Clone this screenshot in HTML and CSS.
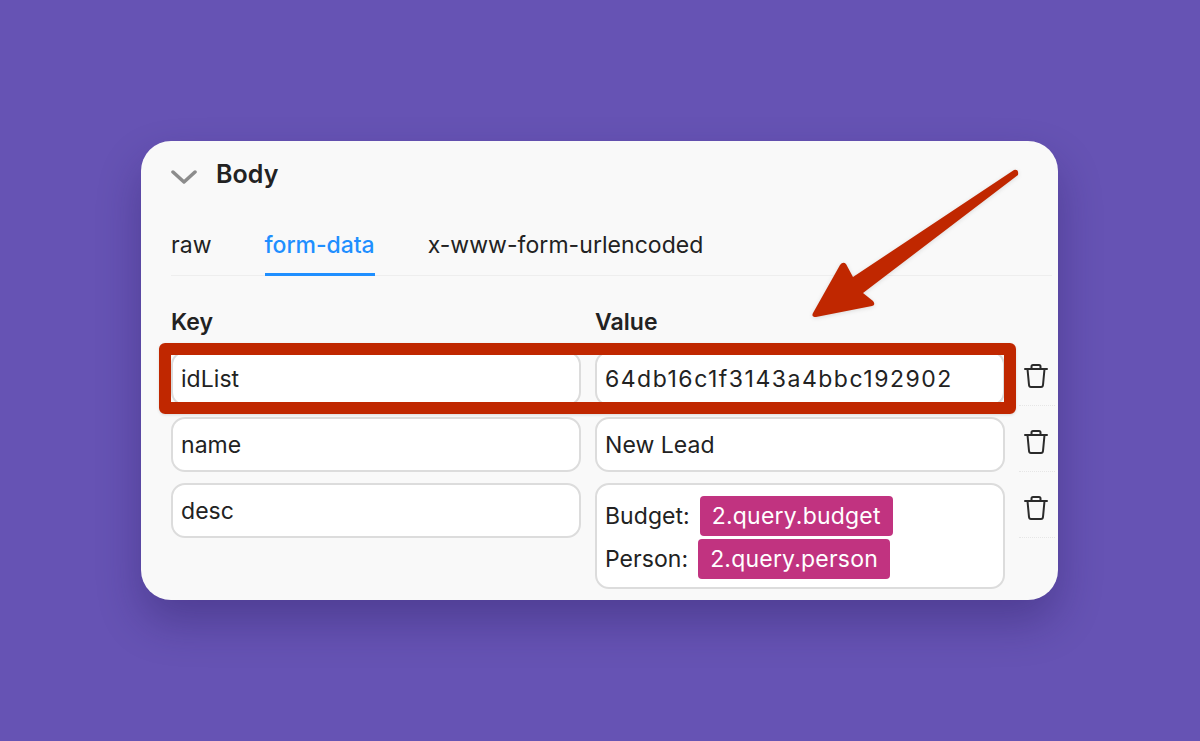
FILE: index.html
```html
<!DOCTYPE html>
<html lang="en">

<head>
  <meta charset="UTF-8">
  <meta name="viewport" content="width=device-width, initial-scale=1.0">
  <title>Body</title>
  <link rel="stylesheet" href="styles.css">
</head>

<body>
  <div class="card">
    <div class="card-header">
      <svg class="chevron" width="26" height="14" viewBox="0 0 26 14">
        <path d="M2 2 L13 12 L24 2" fill="none" stroke="#8c8c8c" stroke-width="3.5" stroke-linecap="round" stroke-linejoin="round" />
      </svg>
      <h2>Body</h2>
    </div>

    <div class="tabs">
      <span class="tab">raw</span>
      <span class="tab active">form-data</span>
      <span class="tab">x-www-form-urlencoded</span>
    </div>

    <div class="col-labels">
      <span>Key</span>
      <span>Value</span>
    </div>

    <div class="row">
      <div class="field">idList</div>
      <div class="field wide">64db16c1f3143a4bbc192902</div>
      <div class="row-action">
        <svg class="trash" width="24" height="26" viewBox="0 0 24 26">
          <path d="M1 6 H23 M7.5 6 V3.5 Q7.5 2 9 2 H15 Q16.500 2 16.500 3.500 V6 M3.500 6 L5 22 Q5.200 24 7 24 H17 Q18.800 24 19 22 L20.500 6" fill="none" stroke="#2b2b2b" stroke-width="2" stroke-linecap="round" stroke-linejoin="round" />
        </svg>
      </div>
    </div>

    <div class="row">
      <div class="field">name</div>
      <div class="field">New Lead</div>
      <div class="row-action">
        <svg class="trash" width="24" height="26" viewBox="0 0 24 26">
          <path d="M1 6 H23 M7.5 6 V3.5 Q7.5 2 9 2 H15 Q16.500 2 16.500 3.500 V6 M3.500 6 L5 22 Q5.200 24 7 24 H17 Q18.800 24 19 22 L20.500 6" fill="none" stroke="#2b2b2b" stroke-width="2" stroke-linecap="round" stroke-linejoin="round" />
        </svg>
      </div>
    </div>

    <div class="row">
      <div class="field">desc</div>
      <div class="field multi">
        <div class="line">Budget: <span class="tag">2.query.budget</span></div>
        <div class="line">Person: <span class="tag">2.query.person</span></div>
      </div>
      <div class="row-action">
        <svg class="trash" width="24" height="26" viewBox="0 0 24 26">
          <path d="M1 6 H23 M7.5 6 V3.5 Q7.5 2 9 2 H15 Q16.500 2 16.500 3.500 V6 M3.500 6 L5 22 Q5.200 24 7 24 H17 Q18.800 24 19 22 L20.500 6" fill="none" stroke="#2b2b2b" stroke-width="2" stroke-linecap="round" stroke-linejoin="round" />
        </svg>
      </div>
    </div>

    <!-- Red annotation on top of the card -->
    <div class="highlight"></div>
    <svg class="arrow" width="230" height="170" viewBox="0 0 230 170">
      <path d="M213 19 Q218 18 217 24 L62 142 L72 150 Q75 154 71 155 L15 166 Q10 166 12 162 L39 114 Q42 110 45 113 L52 126 Z" fill="#c02700" />
    </svg>
  </div>
</body>

</html>
```

FILE: styles.css
```css
* {
  box-sizing: border-box;
}

body {
  margin: 0;
  height: 741px;
  overflow: hidden;
  background-color: #6653b4;
  font-family: Inter, "Liberation Sans", sans-serif;
  font-size: 23px;
  letter-spacing: 0.05px;
  color: #222;
  display: flex;
  justify-content: center;
  padding-top: 141px;
  padding-right: 1px;
}

.card {
  position: relative;
  width: 917px;
  height: 459px;
  background-color: #f9f9f9;
  border-radius: 30px;
  padding: 0 6px 0 30px;
  box-shadow: 0 22px 44px rgba(30, 20, 80, 0.32);
}

/* Header */
.card-header {
  display: flex;
  align-items: center;
  gap: 19px;
  height: 66px;
}

.card-header h2 {
  margin: 0;
  font-size: 25px;
  font-weight: 600;
  color: #222;
}

.chevron {
  margin-top: 6px;
}

/* Tabs */
.tabs {
  display: flex;
  gap: 53px;
  height: 69px;
  border-bottom: 1px solid #eeeeee;
}

.tab {
  height: 69px;
  padding-top: 24px;
  line-height: 28px;
}

.tab.active {
  color: #1f8fff;
  font-weight: 500;
  letter-spacing: -0.05px;
  border-bottom: 3px solid #1f8fff;
}

/* Key / Value table */
.col-labels {
  display: grid;
  grid-template-columns: 410px 410px;
  gap: 14px;
  height: 75px;
  padding-top: 32px;
  line-height: 28px;
  font-weight: 600;
}

.row {
  display: grid;
  grid-template-columns: 410px 410px 36px;
  gap: 14px;
  align-items: start;
  margin-bottom: 11px;
}

.field {
  height: 55px;
  padding: 0 8px;
  line-height: 53px;
  background-color: #fff;
  border: 2px solid #dcdcdc;
  border-radius: 14px;
}

.field.wide {
  letter-spacing: 1.5px;
}

.field.multi {
  height: 106px;
  padding-top: 9px;
  line-height: normal;
}

.line {
  height: 43px;
  display: flex;
  align-items: center;
  gap: 10px;
}

.tag {
  height: 40px;
  padding: 0 12px;
  line-height: 40px;
  letter-spacing: 0.2px;
  color: #fff;
  background-color: #c13380;
  border-radius: 4px;
}

.row-action {
  height: 55px;
  display: flex;
  align-items: center;
  justify-content: center;
  padding-right: 3px;
  border-bottom: 1px dotted #e6e6e6;
}

.trash {
  margin-bottom: 5px;
}

/* Annotation */
.highlight {
  position: absolute;
  left: 18px;
  top: 202px;
  width: 857px;
  height: 71px;
  border: 12px solid #c02700;
  border-radius: 6px;
  box-shadow: 0 1px 3px rgba(0, 0, 0, 0.12);
}

.arrow {
  position: absolute;
  left: 660px;
  top: 10px;
  filter: drop-shadow(0 1px 2px rgba(0, 0, 0, 0.12));
}
```
